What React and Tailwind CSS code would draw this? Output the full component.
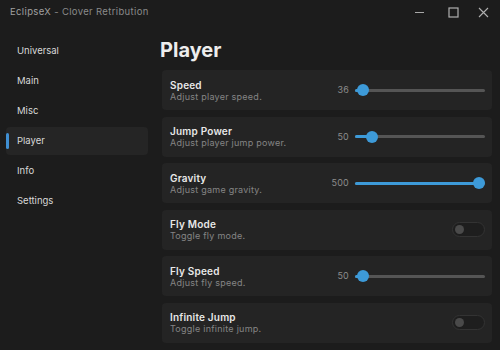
import React from 'react';

const font = { fontFamily: 'Inter, "Open Sans", sans-serif' };

const navItems = ['Universal', 'Main', 'Misc', 'Player', 'Info', 'Settings'];

const rows = [
  { title: 'Speed', desc: 'Adjust player speed.', type: 'slider', value: '36', pct: 2 },
  { title: 'Jump Power', desc: 'Adjust player jump power.', type: 'slider', value: '50', pct: 9 },
  { title: 'Gravity', desc: 'Adjust game gravity.', type: 'slider', value: '500', pct: 100 },
  { title: 'Fly Mode', desc: 'Toggle fly mode.', type: 'toggle' },
  { title: 'Fly Speed', desc: 'Adjust fly speed.', type: 'slider', value: '50', pct: 2 },
  { title: 'Infinite Jump', desc: 'Toggle infinite jump.', type: 'toggle' },
];

const Slider = ({ value, pct }) => (
  <div className="flex items-center gap-[6px]">
    <span className="w-[30px] text-right text-[9px] tracking-[0.2px] text-[#8c8c8c]">{value}</span>
    <div className="relative h-[12px] w-[130px] flex items-center">
      <div className="h-[3px] w-full rounded-full bg-[#555555]" />
      <div className="absolute left-0 h-[3px] rounded-full bg-[#3d9ad8]" style={{ width: `calc(6px + ${pct} * (100% - 12px) / 100)` }} />
      <div
        className="absolute h-[12px] w-[12px] rounded-full bg-[#3d9ad8]"
        style={{ left: `calc(${pct} * (100% - 12px) / 100)` }}
      />
    </div>
  </div>
);

const Toggle = () => (
  <div className="mr-[7px] flex h-[15px] w-[33px] items-center rounded-full border border-[#333333] bg-[#1e1e1e] px-[2px]">
    <div className="h-[9px] w-[9px] rounded-full bg-[#4a4a4a]" />
  </div>
);

export default function App() {
  return (
    <div className="flex h-[350px] w-[500px] flex-col overflow-hidden bg-[#1c1c1c] text-white" style={font}>
      {/* Title bar */}
      <div className="flex h-[24px] items-center justify-between pl-[10px]">
        <span className="text-[9.5px] tracking-[0.35px] text-[#8a8a8a]">
          <span className="text-[#a0a0a0]">EclipseX</span> - Clover Retribution
        </span>
        <div className="flex h-full items-center">
          <div className="flex h-full w-[34px] items-center justify-center">
            <svg width="11" height="11" viewBox="0 0 11 11"><path d="M1 5.5h9" stroke="#a8a8a8" strokeWidth="1" /></svg>
          </div>
          <div className="flex h-full w-[34px] items-center justify-center">
            <svg width="11" height="11" viewBox="0 0 11 11"><rect x="1" y="1" width="9" height="9" fill="none" stroke="#b0b0b0" strokeWidth="1.2" /></svg>
          </div>
          <div className="flex h-full w-[30px] items-center justify-center pr-[4px]">
            <svg width="11" height="11" viewBox="0 0 11 11"><path d="M1 1l9 9M10 1l-9 9" stroke="#b0b0b0" strokeWidth="1.1" /></svg>
          </div>
        </div>
      </div>

      <div className="flex flex-1">
        {/* Sidebar */}
        <nav className="flex w-[155px] flex-col gap-[2px] pl-[6px] pt-[13px]">
          {navItems.map((item) => {
            const active = item === 'Player';
            return (
              <div
                key={item}
                className={`flex h-[28px] w-[142px] items-center rounded-[4px] ${active ? 'bg-[#252525]' : ''}`}
              >
                <div className={`h-[16px] w-[3px] rounded-full ${active ? 'bg-[#3f8fd2]' : ''}`} />
                <span className="ml-[8px] text-[9.5px] text-[#d8d8d8]">{item}</span>
              </div>
            );
          })}
        </nav>

        {/* Content */}
        <main className="flex flex-1 flex-col pl-[7px] pr-[8px]">
          <h1 className="-ml-[2px] mt-[14px] h-[24px] text-[20px] font-bold leading-[24px] text-[#ededed]">Player</h1>
          <div className="mt-[8px] flex flex-col gap-[6.5px]">
            {rows.map((r) => (
              <div key={r.title} className="flex h-[40px] items-center justify-between rounded-[4px] bg-[#242424] pl-[8px]">
                <div className="flex flex-col">
                  <span className="text-[10px] font-semibold leading-[12px] tracking-[0.2px] text-[#e8e8e8]">{r.title}</span>
                  <span className="text-[9px] leading-[11px] tracking-[0.25px] text-[#858585]">{r.desc}</span>
                </div>
                {r.type === 'slider' ? (
                  <div className="pr-[7px]"><Slider value={r.value} pct={r.pct} /></div>
                ) : (
                  <Toggle />
                )}
              </div>
            ))}
          </div>
        </main>
      </div>
    </div>
  );
}
